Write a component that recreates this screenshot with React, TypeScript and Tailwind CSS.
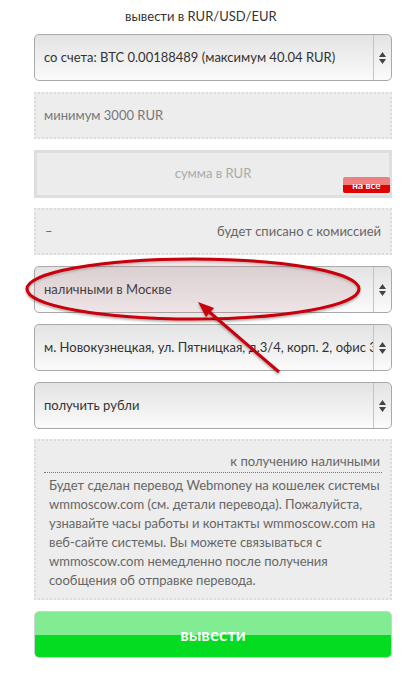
import React from "react";

const font = { fontFamily: '"Lato", "Open Sans", sans-serif' };

interface SelectBoxProps {
  label: string;
}

const SelectBox: React.FC<SelectBoxProps> = ({ label }) => {
  return (
    <div className="flex h-[47px] rounded-[5px] border border-[#a9a9a9] bg-gradient-to-b from-[#e3e3e3] to-[#fbfbfb] text-[13px] text-[#333]">
      <div className="flex flex-1 items-center overflow-hidden whitespace-nowrap pl-[9px]">{label}</div>
      <div className="flex w-[18px] flex-col items-center justify-center gap-[2px] border-l border-[#c4c4c4]">
        <svg width="7" height="5" viewBox="0 0 7 5">
          <path d="M3.5 0L7 5H0Z" fill="#444" />
        </svg>
        <svg width="7" height="5" viewBox="0 0 7 5">
          <path d="M0 0H7L3.5 5Z" fill="#444" />
        </svg>
      </div>
    </div>
  );
};

export default function App() {
  return (
    <div className="relative h-[695px] w-[417px] bg-white" style={font}>
      <div className="ml-[34px] flex w-[358px] flex-col">
        <div className="flex h-[34px] items-center pl-[91px] text-[13px] text-[#333]">вывести в RUR/USD/EUR</div>

        <SelectBox label="со счета: BTC 0.00188489 (максимум 40.04 RUR)" />

        <div className="mt-[11px] flex h-[47px] items-center border-2 border-dotted border-[#dcdcdc] bg-[#ededed] pl-[8px] text-[13px] text-[#777]">
          минимум 3000 RUR
        </div>

        <div className="relative mt-[11px] flex h-[48px] items-center justify-center border-[3px] border-[#dedede] bg-[#ececec] text-[13px] text-[#aaa]">
          сумма в RUR
          <div className="absolute bottom-[2px] right-[-1px] flex h-[16px] w-[47px] items-center justify-center rounded-[2px] bg-[linear-gradient(#f08080_50%,#e00000_50%)] text-[10px] font-bold text-white">
            на все
          </div>
        </div>

        <div className="mt-[10px] flex h-[47px] items-center justify-between border-2 border-dotted border-[#dcdcdc] bg-[#ededed] px-[9px] text-[13px] text-[#666]">
          <span>–</span>
          <span>будет списано с комиссией</span>
        </div>

        <div className="mt-[11px]">
          <SelectBox label="наличными в Москве" />
        </div>
        <div className="mt-[11px]">
          <SelectBox label="м. Новокузнецкая, ул. Пятницкая, д.3/4, корп. 2, офис 3" />
        </div>
        <div className="mt-[11px]">
          <SelectBox label="получить рубли" />
        </div>

        <div className="mt-[10px] border-2 border-dotted border-[#dcdcdc] bg-[#ededed] px-[8px] pb-[8px] pt-[11px] text-[13px] text-[#666]">
          <div className="border-b border-dotted border-[#777] pb-[2px] pr-[2px] text-right leading-[18px]">к получению наличными</div>
          <p className="mt-[3px] pl-[5px] leading-[19px]">
            Будет сделан перевод Webmoney на кошелек системы wmmoscow.com (см. детали перевода). Пожалуйста, узнавайте часы работы и контакты wmmoscow.com на веб-сайте системы. Вы можете связываться с wmmoscow.com немедленно после получения сообщения об отправке перевода.
          </p>
        </div>

        <button className="mt-[11px] h-[47px] rounded-[5px] border border-[#d0d0d0] bg-[linear-gradient(#82ec92_50%,#04dc22_50%)] text-[17px] font-bold text-white">
          вывести
        </button>
      </div>

      <svg className="pointer-events-none absolute left-0 top-0" width="417" height="695">
        <defs>
          <filter id="sh" x="-10%" y="-20%" width="120%" height="150%">
            <feDropShadow dx="0" dy="1.5" stdDeviation="1.2" floodColor="#000" floodOpacity="0.35" />
          </filter>
        </defs>
        <ellipse cx="193" cy="289" rx="166" ry="30" fill="rgba(200,120,130,0.12)" stroke="#c8000a" strokeWidth="3" filter="url(#sh)" />
        <g filter="url(#sh)">
          <line x1="279" y1="372" x2="207" y2="310" stroke="#c8000a" strokeWidth="3" />
          <path d="M198 302 L214 308 L206 317 Z" fill="#c8000a" />
        </g>
      </svg>
    </div>
  );
}
